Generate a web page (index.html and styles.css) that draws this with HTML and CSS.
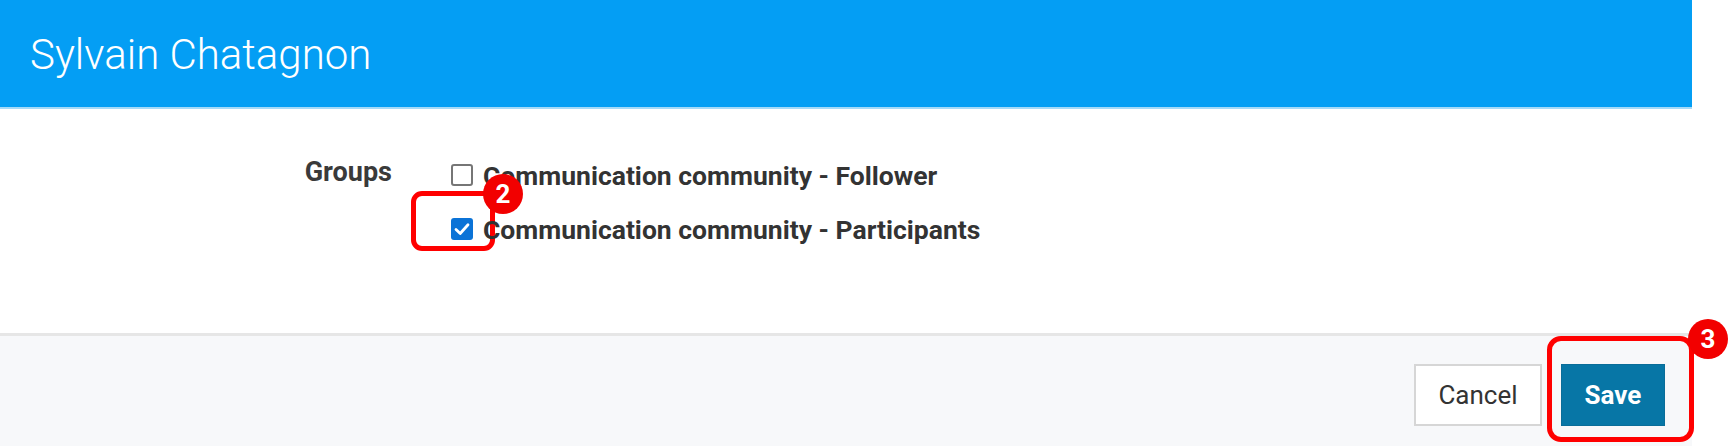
FILE: index.html
```html
<!DOCTYPE html>
<html lang="en">
<head>
<meta charset="utf-8">
<title>Sylvain Chatagnon</title>
<link rel="stylesheet" href="styles.css">
</head>
<body>
<div class="page">
  <div class="modal">
    <header class="modal-header">
      <h1 class="modal-title">Sylvain Chatagnon</h1>
    </header>
    <section class="modal-body">
      <div class="field">
        <div class="field-label">Groups</div>
        <div class="field-options">
          <label class="option">
            <span class="check"></span>
            <span class="option-text">Communication community - Follower</span>
          </label>
          <label class="option">
            <span class="check checked">
              <svg viewBox="0 0 22 22" width="22" height="22"><path d="M5 11.5 L9.2 15.5 L17 6.8" fill="none" stroke="#fff" stroke-width="2.8" stroke-linecap="round" stroke-linejoin="round"/></svg>
              <span class="annot annot-check"></span>
              <span class="badge badge-2">2</span>
            </span>
            <span class="option-text">Communication community - Participants</span>
          </label>
        </div>
      </div>
    </section>
    <footer class="modal-footer">
      <button class="btn btn-cancel" type="button">Cancel</button>
      <span class="save-wrap">
        <button class="btn btn-save" type="button">Save</button>
        <span class="annot annot-save"></span>
        <span class="badge badge-3">3</span>
      </span>
    </footer>
  </div>
</div>
</body>
</html>
```

FILE: styles.css
```css
html, body {
  margin: 0;
  padding: 0;
  background: #ffffff;
}
body {
  font-family: Roboto, "Liberation Sans", Arial, sans-serif;
  color: #333333;
}
.page {
  width: 1732px;
  height: 446px;
  overflow: hidden;
}
.modal {
  width: 1692px;
  display: flex;
  flex-direction: column;
}
.modal-header {
  height: 107px;
  background: #049ef4;
  border-bottom: 2px solid #a6daf8;
  display: flex;
  align-items: center;
  padding-left: 30px;
  box-sizing: content-box;
}
.modal-title {
  margin: 0;
  font-weight: 300;
  font-size: 42px;
  color: #ffffff;
  padding-top: 2px;
}
.modal-body {
  height: 224px;
  box-sizing: border-box;
  padding-top: 48px;
}
.field {
  display: grid;
  grid-template-columns: 392px 1fr;
  column-gap: 59px;
}
.field-label {
  text-align: right;
  font-weight: 700;
  font-size: 27px;
  line-height: 36px;
  color: #3a3a3a;
  margin-top: -3px;
}
.field-options {
  display: flex;
  flex-direction: column;
  gap: 18px;
}
.option {
  display: flex;
  align-items: center;
  height: 36px;
  gap: 10px;
}
.check {
  position: relative;
  width: 18px;
  height: 18px;
  border: 2px solid #767676;
  border-radius: 3px;
  background: #ffffff;
  flex: none;
}
.check.checked {
  width: 22px;
  height: 22px;
  border: none;
  background: #0b73d7;
}
.check.checked svg {
  position: absolute;
  left: 0;
  top: 0;
}
.option-text {
  font-weight: 700;
  font-size: 26.5px;
  color: #333333;
  position: relative;
}
.modal-footer {
  height: 107px;
  border-top: 3px solid #e6e6e6;
  background: #f7f8fa;
  display: flex;
  justify-content: flex-end;
  align-items: flex-start;
  padding: 28px 27px 0 0;
  gap: 19px;
  box-sizing: content-box;
}
.btn {
  height: 62px;
  font-family: Roboto, "Liberation Sans", Arial, sans-serif;
  font-size: 26px;
  margin: 0;
  cursor: pointer;
}
.btn-cancel {
  width: 128px;
  background: #ffffff;
  border: 2px solid #d6d6d6;
  color: #333333;
  font-weight: 400;
}
.save-wrap {
  position: relative;
  display: block;
}
.btn-save {
  display: block;
  width: 104px;
  background: #0776a6;
  border: 1px solid #0a6d99;
  color: #ffffff;
  font-weight: 700;
}
.annot {
  position: absolute;
  border: 5px solid #ff0000;
  border-radius: 11px;
  box-sizing: border-box;
  pointer-events: none;
}
.annot-check {
  left: -40px;
  top: -27px;
  width: 84px;
  height: 60px;
}
.annot-save {
  left: -14px;
  top: -28px;
  width: 147px;
  height: 106px;
  border-radius: 14px;
}
.badge {
  position: absolute;
  width: 40px;
  height: 40px;
  border-radius: 50%;
  background: #f20000;
  color: #ffffff;
  font-family: Roboto, "Liberation Sans", Arial, sans-serif;
  font-weight: 700;
  font-size: 26px;
  line-height: 40px;
  text-align: center;
  z-index: 2;
}
.badge-2 {
  left: 32px;
  top: -44px;
}
.badge-3 {
  left: 127px;
  top: -45px;
}
```
